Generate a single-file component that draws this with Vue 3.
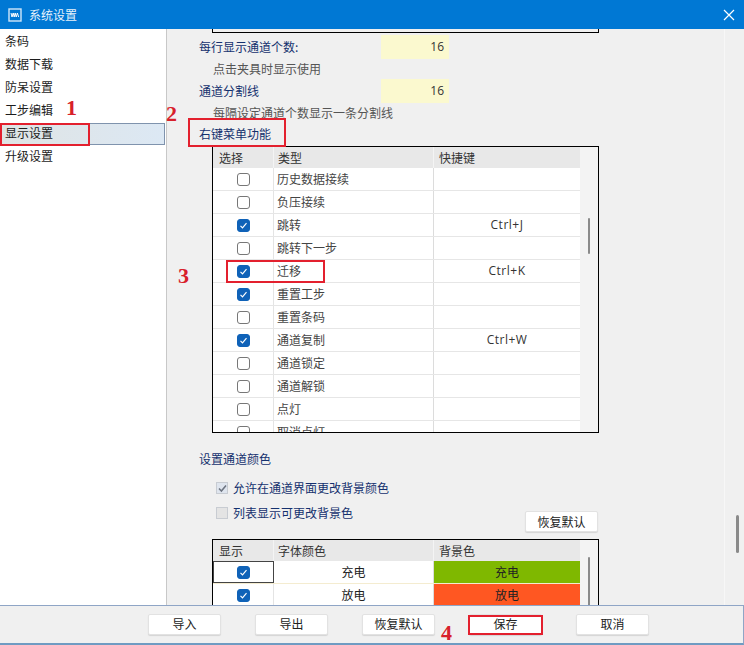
<script setup>
const menu = ['条码', '数据下载', '防呆设置', '工步编辑', '显示设置', '升级设置']
const rows = [
  { name: '历史数据接续', on: false, key: '' },
  { name: '负压接续', on: false, key: '' },
  { name: '跳转', on: true, key: 'Ctrl+J' },
  { name: '跳转下一步', on: false, key: '' },
  { name: '迁移', on: true, key: 'Ctrl+K' },
  { name: '重置工步', on: true, key: '' },
  { name: '重置条码', on: false, key: '' },
  { name: '通道复制', on: true, key: 'Ctrl+W' },
  { name: '通道锁定', on: false, key: '' },
  { name: '通道解锁', on: false, key: '' },
  { name: '点灯', on: false, key: '' },
  { name: '取消点灯', on: false, key: '' }
]
const colors = [
  { name: '充电', cls: 'green', focus: true },
  { name: '放电', cls: 'orange', focus: false }
]
const buttons = ['导入', '导出', '恢复默认', '保存', '取消']
</script>

<template>
  <div class="win">
    <header class="title">
      <svg class="logo" width="14" height="14" viewBox="0 0 14 14">
        <rect x="1" y="1" width="12" height="12" fill="#0078d4" stroke="#cfe6fa" stroke-width="1.4" />
        <path d="M3 5l1 4 1.2-4 1 4 1-4 1 4 1.2-4 1.2 4" fill="none" stroke="#fff" stroke-width="1" />
      </svg>
      <span class="title-text">系统设置</span>
      <svg class="close" width="12" height="12" viewBox="0 0 12 12">
        <path d="M1 1l10 10M11 1L1 11" stroke="#fff" stroke-width="1.2" fill="none" />
      </svg>
    </header>

    <div class="main">
      <aside class="side">
        <div v-for="m in menu" :key="m" class="side-item" :class="{ sel: m === '显示设置' }">{{ m }}</div>
      </aside>

      <section class="panel">
        <div class="stub"></div>

        <div class="field first">
          <span class="blue">每行显示通道个数:</span>
          <span class="num">16</span>
        </div>
        <div class="hint">点击夹具时显示使用</div>
        <div class="field">
          <span class="blue">通道分割线</span>
          <span class="num">16</span>
        </div>
        <div class="hint">每隔设定通道个数显示一条分割线</div>
        <div class="blue head-a">右键菜单功能</div>

        <div class="table menu-table">
          <div class="body">
            <div class="row hrow">
              <span class="c1 hcell">选择</span>
              <span class="c2 hcell">类型</span>
              <span class="c3 hcell">快捷键</span>
            </div>
            <div v-for="r in rows" :key="r.name" class="row">
              <span class="c1 center">
                <span class="cb" :class="{ on: r.on }">
                  <svg v-if="r.on" width="9" height="9" viewBox="0 0 9 9"><path d="M1.5 4.8l2 2 4-4.6" fill="none" stroke="#fff" stroke-width="1.2" /></svg>
                </span>
              </span>
              <span class="c2 name">{{ r.name }}</span>
              <span class="c3 center latin">{{ r.key }}</span>
            </div>
          </div>
          <div class="track"><i class="thumb thumb-a"></i></div>
        </div>

        <div class="blue head-b">设置通道颜色</div>
        <label class="opt first-opt">
          <span class="old-cb">
            <svg width="9" height="9" viewBox="0 0 9 9"><path d="M1 4.5l2.4 2.6L8 1.5" fill="none" stroke="#6d7480" stroke-width="1.5" /></svg>
          </span>
          <span class="blue">允许在通道界面更改背景颜色</span>
        </label>
        <div class="opt-row">
          <label class="opt">
            <span class="old-cb dim"></span>
            <span class="blue">列表显示可更改背景色</span>
          </label>
          <button class="btn reset">恢复默认</button>
        </div>

        <div class="table color-table">
          <div class="body">
            <div class="row hrow">
              <span class="c1 hcell">显示</span>
              <span class="c2 hcell">字体颜色</span>
              <span class="c3 hcell">背景色</span>
            </div>
            <div v-for="c in colors" :key="c.name" class="row crow">
              <span class="c1 center" :class="{ focus: c.focus }">
                <span class="cb on">
                  <svg width="9" height="9" viewBox="0 0 9 9"><path d="M1.5 4.8l2 2 4-4.6" fill="none" stroke="#fff" stroke-width="1.2" /></svg>
                </span>
              </span>
              <span class="c2 center">{{ c.name }}</span>
              <span class="c3 center" :class="c.cls">{{ c.name }}</span>
            </div>
          </div>
          <div class="track"><i class="thumb thumb-b"></i></div>
        </div>
      </section>

      <div class="outer-track"><i class="outer-thumb"></i></div>
    </div>

    <footer class="foot">
      <button v-for="b in buttons" :key="b" class="btn">{{ b }}</button>
    </footer>

    <div class="mark box1"></div>
    <div class="mark box2"></div>
    <div class="mark box3"></div>
    <div class="mark box4"></div>
    <span class="no n1">1</span>
    <span class="no n2">2</span>
    <span class="no n3">3</span>
    <span class="no n4">4</span>
  </div>
</template>

<style>
html, body { margin: 0; padding: 0; background: #f0f0f0; }
</style>

<style scoped>
.win {
  position: relative;
  width: 744px;
  height: 645px;
  display: flex;
  flex-direction: column;
  overflow: hidden;
  background: #f0f0f0;
  color: #222;
  font: 12px/16px "Noto Sans CJK SC", "Noto Sans", sans-serif;
}
.title {
  flex: none;
  height: 29px;
  background: #0078d4;
  display: flex;
  align-items: center;
  padding-left: 8px;
  color: #e6f2fb;
}
.title-text { margin-left: 7px; }
.close { margin-left: auto; margin-right: 9px; }
.logo { flex: none; }

.main { flex: none; height: 576px; display: flex; overflow: hidden; }
.side {
  flex: none;
  width: 166px;
  background: #fff;
  border-right: 1px solid #c8c8c8;
  padding-top: 1px;
  box-sizing: content-box;
}
.side-item { height: 23px; line-height: 22px; padding-left: 5px; box-sizing: border-box; color: #1c1c1c; }
.side-item.sel {
  height: 22px;
  margin-top: 1px;
  margin-right: 1px;
  line-height: 20px;
  background: linear-gradient(90deg, #dfe4e4, #dce8f4);
  box-shadow: inset 0 0 0 1px #7f93ad;
}

.panel { flex: none; width: 557px; padding-left: 32px; box-sizing: border-box; height: 576px; overflow: hidden; }
.stub { width: 387px; height: 4px; margin-left: 13px; box-sizing: border-box; border: 1px solid #000; border-top: 0; background: #f0f0f0; }

.blue { color: #14306e; }
.field { display: flex; align-items: center; justify-content: space-between; width: 250px; height: 24px; }
.field.first { margin-top: 2px; }
.num {
  width: 68px;
  height: 24px;
  background: #fbf9cf;
  text-align: right;
  padding-right: 5px;
  box-sizing: border-box;
  line-height: 24px;
  font-family: "Open Sans", sans-serif;
  color: #333;
}
.hint { margin-left: 14px; height: 20px; line-height: 20px; color: #555; }
.head-a { height: 22px; line-height: 22px; }

.table { display: flex; width: 387px; margin-left: 13px; border: 1px solid #000; box-sizing: border-box; overflow: hidden; background: #f3f3f3; }
.menu-table { margin-top: 1px; height: 287px; }
.color-table { margin-top: 8px; height: 90px; }
.body { width: 367px; flex: none; }
.track { flex: 1; position: relative; }
.thumb { position: absolute; left: 8px; width: 2px; background: #8a8a8a; border-radius: 1px; }
.thumb-a { top: 71px; height: 36px; }
.thumb-b { top: 17px; height: 60px; }

.row { display: flex; height: 23px; box-sizing: border-box; border-bottom: 1px solid #e6e6e6; background: #fff; }
.hrow { height: 21px; background: #e8e8e8; border-bottom: 0; }
.c1 { width: 61px; flex: none; box-sizing: border-box; border-right: 1px solid #e4e4e4; }
.c2 { width: 160px; flex: none; box-sizing: border-box; border-right: 1px solid #dcdcdc; }
.c3 { flex: 1; }
.hcell { border-color: #f4f4f4; padding-left: 6px; line-height: 21px; color: #333; }
.c2.hcell { padding-left: 4px; }
.c3.hcell { padding-left: 5px; }
.center { display: flex; align-items: center; justify-content: center; }
.name { padding-left: 3px; line-height: 22px; color: #444; }
.latin { font-family: "Open Sans", sans-serif; color: #333; letter-spacing: 0.5px; }

.cb {
  width: 13px;
  height: 13px;
  box-sizing: border-box;
  border: 1px solid #777;
  border-radius: 3px;
  background: #fff;
  display: flex;
  align-items: center;
  justify-content: center;
}
.cb.on { background: #0f62b8; border-color: #0f62b8; }

.head-b { margin-top: 17px; height: 18px; line-height: 18px; }
.opt { display: flex; align-items: center; gap: 5px; margin-left: 17px; height: 20px; }
.first-opt { margin-top: 10px; }
.opt-row { display: flex; justify-content: space-between; align-items: flex-start; width: 399px; height: 28px; margin-top: 5px; }
.old-cb {
  width: 12px;
  height: 12px;
  box-sizing: border-box;
  border: 1px solid #c8ccd2;
  background: #dfe5ee;
  display: flex;
  align-items: center;
  justify-content: center;
}
.old-cb.dim { background: #e4e4e4; }

.btn {
  width: 73px;
  height: 21px;
  padding: 0;
  background: #fff;
  border: 1px solid #e2e2e2;
  border-radius: 2px;
  box-shadow: 0 1px 1px #d4d4d4;
  font: 12px/16px "Noto Sans CJK SC", sans-serif;
  color: #222;
}
.reset { flex: none; margin-top: 8px; }

.crow { height: 23px; border-bottom: 1px solid #f4ecd0; }
.focus { border: 1px solid #444; }
.green { background: #7fb800; }
.orange { background: #ff5722; }

.outer-track { flex: 1; position: relative; border-left: 1px solid #f7f7f7; }
.outer-thumb { position: absolute; left: 11px; top: 486px; width: 3px; height: 38px; background: #8a8a8a; border-radius: 2px; }

.foot {
  flex: none;
  height: 40px;
  box-sizing: border-box;
  display: flex;
  gap: 34px;
  align-items: center;
  padding: 0 0 1px 148px;
  background: #f0f0f0;
  border-top: 1px solid #8fa5c6;
  border-bottom: 2px solid #6f9bc2;
  border-right: 1px solid #8fa5c6;
  position: relative;
}

.mark { position: absolute; box-sizing: border-box; border: 2px solid #e3202e; }
.box1 { left: 0; top: 123px; width: 90px; height: 23px; }
.box2 { left: 188px; top: 118px; width: 98px; height: 29px; }
.box3 { left: 226px; top: 260px; width: 99px; height: 23px; }
.box4 { left: 468px; top: 615px; width: 75px; height: 20px; }
.no {
  position: absolute;
  color: #d8202a;
  font: bold 22px/22px "Liberation Serif", serif;
}
.n1 { left: 66px; top: 97px; }
.n2 { left: 166px; top: 103px; }
.n3 { left: 178px; top: 265px; }
.n4 { left: 441px; top: 622px; }
</style>
